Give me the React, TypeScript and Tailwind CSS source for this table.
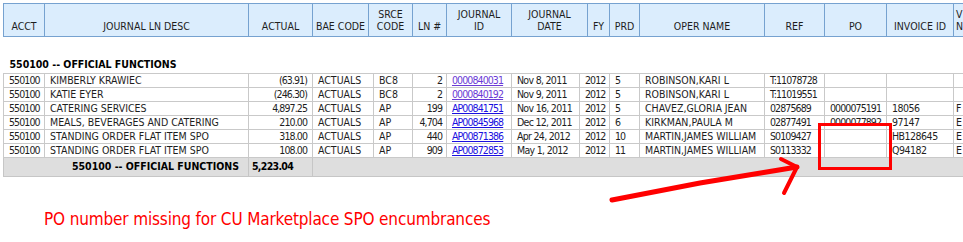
const FONT = { fontFamily: "'DejaVu Sans Condensed', 'DejaVu Sans', sans-serif" };

const headCols = [41, 204, 64, 56, 44, 34, 65, 76, 22, 30, 125, 60, 62, 67, 60];
const bodyCols = [41, 204, 64, 61, 39, 34, 65, 68, 30, 30, 125, 60, 62, 67, 60];

const headers: string[][] = [
  ['ACCT'],
  ['JOURNAL LN DESC'],
  ['ACTUAL'],
  ['BAE CODE'],
  ['SRCE', 'CODE'],
  ['LN #'],
  ['JOURNAL', 'ID'],
  ['JOURNAL', 'DATE'],
  ['FY'],
  ['PRD'],
  ['OPER NAME'],
  ['REF'],
  ['PO'],
  ['INVOICE ID'],
  ['V', 'N'],
];

interface Row {
  desc: string;
  actual: string;
  srce: string;
  ln: string;
  jid: string;
  visited?: boolean;
  date: string;
  prd: string;
  oper: string;
  ref: string;
  po: string;
  invoice: string;
  v: string;
}

const rows: Row[] = [
  { desc: 'KIMBERLY KRAWIEC', actual: '(63.91)', srce: 'BC8', ln: '2', jid: '0000840031', visited: true, date: 'Nov 8, 2011', prd: '5', oper: 'ROBINSON,KARI L', ref: 'T:11078728', po: '', invoice: '', v: '' },
  { desc: 'KATIE EYER', actual: '(246.30)', srce: 'BC8', ln: '2', jid: '0000840192', visited: true, date: 'Nov 9, 2011', prd: '5', oper: 'ROBINSON,KARI L', ref: 'T:11019551', po: '', invoice: '', v: '' },
  { desc: 'CATERING SERVICES', actual: '4,897.25', srce: 'AP', ln: '199', jid: 'AP00841751', date: 'Nov 16, 2011', prd: '5', oper: 'CHAVEZ,GLORIA JEAN', ref: '02875689', po: '0000075191', invoice: '18056', v: 'F' },
  { desc: 'MEALS, BEVERAGES AND CATERING', actual: '210.00', srce: 'AP', ln: '4,704', jid: 'AP00845968', date: 'Dec 12, 2011', prd: '6', oper: 'KIRKMAN,PAULA M', ref: '02877491', po: '0000077892', invoice: '97147', v: 'E' },
  { desc: 'STANDING ORDER FLAT ITEM SPO', actual: '318.00', srce: 'AP', ln: '440', jid: 'AP00871386', date: 'Apr 24, 2012', prd: '10', oper: 'MARTIN,JAMES WILLIAM', ref: 'S0109427', po: '', invoice: 'HB128645', v: 'E' },
  { desc: 'STANDING ORDER FLAT ITEM SPO', actual: '108.00', srce: 'AP', ln: '909', jid: 'AP00872853', date: 'May 1, 2012', prd: '11', oper: 'MARTIN,JAMES WILLIAM', ref: 'S0113332', po: '', invoice: 'Q94182', v: 'E' },
];

// digits in the old report font are much narrower than its capitals
const td = 'border border-[#c9c9c9] h-[14px] px-[5px] py-0 leading-[13px] whitespace-nowrap overflow-hidden';
const num = `${td} tracking-[-0.9px]`;

export default function App() {
  return (
    <div className="relative w-[963px] h-[242px] overflow-hidden bg-white text-[#1e1e1e]" style={FONT}>
      <div className="pl-[3px] pt-[3px]">
        <table className="table-fixed border-collapse w-[1010px] text-[10.5px]">
          <colgroup>
            {headCols.map((w, i) => (
              <col key={i} style={{ width: w }} />
            ))}
          </colgroup>
          <thead>
            <tr>
              {headers.map((h, i) => (
                <th
                  key={i}
                  className={`border border-[#76a2d0] bg-[#dbedfd] h-[33px] align-bottom pb-[4px] px-[2px] font-normal leading-[12px] whitespace-nowrap overflow-hidden ${
                    i === 14 ? 'text-left' : 'text-center'
                  }`}
                >
                  {h.map((line, j) => (
                    <div key={j}>{line}</div>
                  ))}
                </th>
              ))}
            </tr>
          </thead>
        </table>

        <table className="table-fixed border-collapse w-[1010px] text-[10.5px]">
          <colgroup>
            {bodyCols.map((w, i) => (
              <col key={i} style={{ width: w }} />
            ))}
          </colgroup>
          <tbody>
            <tr>
              <td colSpan={15} className="h-[18px]" />
            </tr>
            <tr>
              <td colSpan={15} className="h-[18px] px-[6px] pt-[2px] font-bold text-black align-middle">
                550100 -- OFFICIAL FUNCTIONS
              </td>
            </tr>
            {rows.map((r, i) => (
              <tr key={i}>
                <td className={num}>550100</td>
                <td className={td}>{r.desc}</td>
                <td className={`${num} text-right`}>{r.actual}</td>
                <td className={td}>ACTUALS</td>
                <td className={td}>{r.srce}</td>
                <td className={`${num} text-right !pr-[4px]`}>{r.ln}</td>
                <td className={num}>
                  <a href="#" className={`underline ${r.visited ? 'text-[#6b3bd6]' : 'text-[#1a0fe0]'}`}>
                    {r.jid}
                  </a>
                </td>
                <td className={`${td} tracking-[-0.7px]`}>{r.date}</td>
                <td className={num}>2012</td>
                <td className={num}>{r.prd}</td>
                <td className={td}>{r.oper}</td>
                <td className={num}>{r.ref}</td>
                <td className={num}>{r.po}</td>
                <td className={`${td} tracking-[-0.5px]`}>{r.invoice}</td>
                <td className={`${td} !pl-[2px]`}>{r.v}</td>
              </tr>
            ))}
            <tr className="bg-[#dedede]">
              <td colSpan={2} className="border border-[#c6c6c6] h-[19px] pr-[9px] text-right font-bold text-black whitespace-nowrap">
                550100 -- OFFICIAL FUNCTIONS
              </td>
              <td className="border border-[#c6c6c6] pl-[3px] font-bold text-black whitespace-nowrap tracking-[-0.7px]">
                5,223.04
              </td>
              <td colSpan={12} className="border border-[#c6c6c6]" />
            </tr>
          </tbody>
        </table>
      </div>

      <p className="mt-[31px] ml-[44px] text-[17px] leading-[22px] tracking-[-0.15px] text-[#ff0000] whitespace-nowrap">
        PO number missing for CU Marketplace SPO encumbrances
      </p>

      <svg className="absolute left-0 top-0 pointer-events-none" width="963" height="242" viewBox="0 0 963 242">
        <rect x="819.5" y="124.5" width="71" height="44" fill="none" stroke="#ff0000" strokeWidth="3" />
        <path d="M612 200 L700 183 L797 167" fill="none" stroke="#ff0000" strokeWidth="5" strokeLinecap="round" />
        <path d="M781 159 L797 167 L784 193" fill="none" stroke="#ff0000" strokeWidth="4" strokeLinecap="round" strokeLinejoin="round" />
      </svg>
    </div>
  );
}
